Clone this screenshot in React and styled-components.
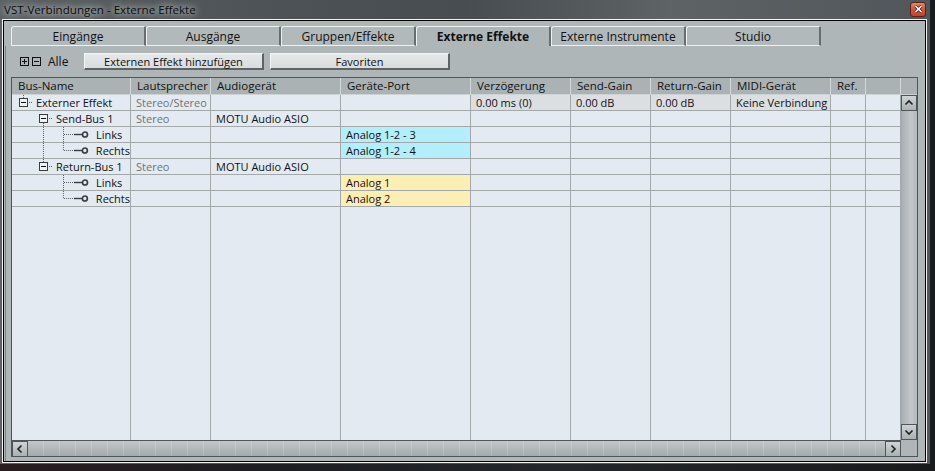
import React from 'react';
import styled, { createGlobalStyle } from 'styled-components';

const GlobalStyle = createGlobalStyle`
  html, body {
    margin: 0;
    padding: 0;
    background: #1b1c1e;
  }
  body {
    font-family: "Open Sans", "Noto Sans", sans-serif;
    font-size: 11px;
    color: #111;
  }
`;

const COLS = '119px 80px 130px 130px 100px 80px 80px 100px 35px 35px';

const Desktop = styled.div`
  width: 935px;
  height: 471px;
  overflow: hidden;
  background: linear-gradient(90deg, #2a1d20 0%, #1d1f23 30%, #24272b 60%, #1a1b1d 100%);
`;

const Window = styled.div`
  width: 930px;
  height: 464px;
  box-sizing: border-box;
  padding: 0 3px 1px 2px;
  display: flex;
  flex-direction: column;
  background: linear-gradient(90deg, #5c6264 0%, #4c5255 30%, #474d50 50%, #5e6365 72%, #50565a 100%);
`;

const TitleBar = styled.div`
  height: 19px;
  display: flex;
  align-items: center;
  justify-content: space-between;
  padding-left: 2px;
`;

const Title = styled.span`
  font-size: 11.6px;
  color: #0c0c0c;
  text-shadow: 0 0 6px rgba(235, 240, 240, 0.9), 0 0 10px rgba(235, 240, 240, 0.6);
`;

const CloseButton = styled.div`
  width: 16px;
  height: 15px;
  margin-right: 1px;
  margin-top: -1px;
  box-sizing: border-box;
  border: 1px solid #5b2418;
  border-radius: 3px;
  background: linear-gradient(#e88468, #d4553a 50%, #c2432a);
  display: flex;
  align-items: center;
  justify-content: center;
`;

const Frame = styled.div`
  flex: 1;
  display: flex;
  border: 1px solid #f2f2f2;
`;

const Content = styled.div`
  flex: 1;
  display: flex;
  flex-direction: column;
  border: 1px solid #000;
  background: #aeb6b8;
  padding-top: 5px;
`;

const TabStrip = styled.div`
  display: flex;
  height: 20px;
  padding-left: 7px;
`;

const Tab = styled.div`
  width: 135px;
  height: 20px;
  box-sizing: border-box;
  display: flex;
  align-items: center;
  justify-content: center;
  font-size: 12px;
  font-weight: ${p => (p.$active ? 700 : 400)};
  background: ${p => (p.$active ? '#aeb6b8' : '#b1b9bb')};
  border-top: 1px solid #eef1f1;
  border-left: 1px solid #eef1f1;
  border-right: 2px solid #676d70;
  border-bottom: ${p => (p.$active ? 'none' : '1px solid #eef1f1')};
  border-top-left-radius: 3px;
  border-top-right-radius: 2px;
`;

const Panel = styled.div`
  flex: 1;
  display: flex;
  flex-direction: column;
  margin-left: 1px;
  border-left: 1px solid #7d8487;
  padding: 7px 0 4px 5px;
`;

const Toolbar = styled.div`
  height: 17px;
  display: flex;
  align-items: center;
  margin-bottom: 7px;
`;

const ExpandAll = styled.div`
  display: flex;
  align-items: center;
  gap: 3px;
  margin-left: 9px;
  width: 64px;
  font-size: 12px;
`;

const AllLabel = styled.span`
  margin-left: 4px;
`;

const ToolButton = styled.div`
  width: 180px;
  height: 17px;
  box-sizing: border-box;
  margin-right: 6px;
  display: flex;
  align-items: center;
  justify-content: center;
  font-size: 11px;
  background: linear-gradient(#e6e9ea, #d9dcdd);
  border-top: 1px solid #f4f6f6;
  border-left: 1px solid #f4f6f6;
  border-right: 2px solid #5e6466;
  border-bottom: 2px solid #5e6466;
`;

const Table = styled.div`
  flex: 1;
  width: 907px;
  box-sizing: border-box;
  border: 1px solid #4f5558;
  display: flex;
  flex-direction: column;
  font-size: 11px;
`;

const HeaderRow = styled.div`
  display: flex;
  height: 17px;
  box-sizing: border-box;
  background: #aab2b4;
  border-bottom: 1px solid #cdd2d4;
  font-size: 11.5px;
`;

const HeaderGrid = styled.div`
  display: grid;
  grid-template-columns: ${COLS};
`;

const HeaderCell = styled.div`
  border-right: 1px solid #d3d7d9;
  padding-left: 6px;
  line-height: 16px;
  white-space: nowrap;
  overflow: hidden;
`;

const Body = styled.div`
  flex: 1;
  display: flex;
  min-height: 0;
`;

const Grid = styled.div`
  width: 889px;
  display: flex;
  flex-direction: column;
  background: #e3eaf1;
`;

const Row = styled.div`
  display: grid;
  grid-template-columns: ${COLS};
  height: 16px;
  box-sizing: border-box;
  border-bottom: 1px solid #a3a8ab;
`;

const Filler = styled.div`
  flex: 1;
  display: grid;
  grid-template-columns: ${COLS};
`;

const toneBg = {
  cyan: '#b2eefb',
  yellow: '#fdefb3',
  gray: '#dcdfe1',
};

const Cell = styled.div`
  border-right: 1px solid #a3a8ab;
  padding-left: ${p => (p.$flush ? 0 : 5)}px;
  line-height: 15px;
  white-space: nowrap;
  overflow: hidden;
  display: flex;
  align-items: center;
  color: ${p => (p.$muted ? '#6f7274' : '#111')};
  background: ${p => (p.$tone ? toneBg[p.$tone] : 'transparent')};
`;

const VScroll = styled.div`
  width: 16px;
  display: flex;
  flex-direction: column;
  background: linear-gradient(90deg, #a6adb0, #c3c8ca 60%, #b3babc);
`;

const ScrollButton = styled.div`
  width: 16px;
  height: 16px;
  box-sizing: border-box;
  display: flex;
  align-items: center;
  justify-content: center;
  border: 1px solid #4f5558;
  background: linear-gradient(#cfd4d5, #aab1b3);
`;

const Track = styled.div`
  flex: 1;
`;

const HScrollRow = styled.div`
  height: 16px;
  display: flex;
`;

const HScroll = styled.div`
  width: 889px;
  display: flex;
  border-top: 1px solid #4f5558;
  box-sizing: border-box;
  background:
    repeating-linear-gradient(90deg, transparent 0 15px, rgba(255, 255, 255, 0.18) 15px 16px),
    linear-gradient(#c2c7c9, #a3aaac);
`;

const HTrack = styled.div`
  flex: 1;
`;

const Corner = styled.div`
  flex: 1;
  background: #aeb6b8;
`;

const Chevron = ({ dir }) => {
  const d = {
    up: 'M1.5 5.5 L5 2 L8.5 5.5',
    down: 'M1.5 2.5 L5 6 L8.5 2.5',
    left: 'M5.5 1.5 L2 5 L5.5 8.5',
    right: 'M2.5 1.5 L6 5 L2.5 8.5',
  }[dir];
  const vertical = dir === 'up' || dir === 'down';
  return (
    <svg width={vertical ? 10 : 8} height={vertical ? 8 : 10} viewBox={vertical ? '0 0 10 8' : '0 0 8 10'}>
      <path d={d} fill="none" stroke="#1d2122" strokeWidth="1.6" />
    </svg>
  );
};

const BoxIcon = ({ plus }) => (
  <svg width="9" height="9" viewBox="0 0 9 9">
    <rect x="0.5" y="0.5" width="8" height="8" fill="none" stroke="#111" />
    <path d="M2 4.5 H7" stroke="#111" />
    {plus && <path d="M4.5 2 V7" stroke="#111" />}
  </svg>
);

const dot = { stroke: '#5c5f61', strokeWidth: 1, strokeDasharray: '1 1' };

const Expander = ({ x }) => (
  <g>
    <rect x={x + 0.5} y="3.5" width="8" height="8" fill="#eef2f6" stroke="#3a3d3f" />
    <path d={`M${x + 2} 7.5 H${x + 7}`} stroke="#111" />
  </g>
);

const TreeGlyph = ({ kind, cont, last, top }) => {
  if (kind === 'root') {
    return (
      <svg width="24" height="15" viewBox="0 0 24 15">
        <path d="M11.5 0 V3" {...dot} />
        <Expander x={7} />
        <path d="M17 7.5 H21" {...dot} />
      </svg>
    );
  }
  if (kind === 'group') {
    return (
      <svg width="44" height="15" viewBox="0 0 44 15">
        {top ? <path d="M31.5 0 V3" {...dot} /> : <path d="M31.5 12 V15" {...dot} />}
        <Expander x={27} />
        <path d="M37 7.5 H41" {...dot} />
      </svg>
    );
  }
  return (
    <svg width="84" height="15" viewBox="0 0 84 15">
      {cont && <path d="M31.5 0 V15" {...dot} />}
      <path d={`M51.5 0 V${last ? 7.5 : 15}`} {...dot} />
      <path d="M52 7.5 H62" {...dot} />
      <path d="M62 7.5 H70" stroke="#3b3e40" strokeWidth="1.4" />
      <circle cx="73" cy="7.5" r="2.5" fill="none" stroke="#3b3e40" strokeWidth="1.7" />
    </svg>
  );
};

const headers = ['Bus-Name', 'Lautsprecher', 'Audiogerät', 'Geräte-Port', 'Verzögerung', 'Send-Gain', 'Return-Gain', 'MIDI-Gerät', 'Ref.', ''];

const rows = [
  { kind: 'root', name: 'Externer Effekt', speaker: 'Stereo/Stereo', delay: '0.00 ms (0)', send: '0.00 dB', ret: '0.00 dB', midi: 'Keine Verbindung' },
  { kind: 'group', name: 'Send-Bus 1', speaker: 'Stereo', device: 'MOTU Audio ASIO' },
  { kind: 'leaf', cont: true, name: 'Links', port: 'Analog 1-2 - 3', tone: 'cyan' },
  { kind: 'leaf', cont: true, last: true, name: 'Rechts', port: 'Analog 1-2 - 4', tone: 'cyan' },
  { kind: 'group', top: true, name: 'Return-Bus 1', speaker: 'Stereo', device: 'MOTU Audio ASIO' },
  { kind: 'leaf', name: 'Links', port: 'Analog 1', tone: 'yellow' },
  { kind: 'leaf', last: true, name: 'Rechts', port: 'Analog 2', tone: 'yellow' },
];

const tabs = ['Eingänge', 'Ausgänge', 'Gruppen/Effekte', 'Externe Effekte', 'Externe Instrumente', 'Studio'];

function App() {
  return (
    <Desktop>
      <GlobalStyle />
      <Window>
        <TitleBar>
          <Title>VST-Verbindungen - Externe Effekte</Title>
          <CloseButton>
            <svg width="9" height="8" viewBox="0 0 9 8">
              <path d="M1.5 1 L7.5 7 M7.5 1 L1.5 7" stroke="#4a1a10" strokeWidth="3" />
              <path d="M1.5 1 L7.5 7 M7.5 1 L1.5 7" stroke="#fff" strokeWidth="1.6" />
            </svg>
          </CloseButton>
        </TitleBar>
        <Frame>
          <Content>
            <TabStrip>
              {tabs.map(t => (
                <Tab key={t} $active={t === 'Externe Effekte'}>{t}</Tab>
              ))}
            </TabStrip>
            <Panel>
              <Toolbar>
                <ExpandAll>
                  <BoxIcon plus />
                  <BoxIcon />
                  <AllLabel>Alle</AllLabel>
                </ExpandAll>
                <ToolButton>Externen Effekt hinzufügen</ToolButton>
                <ToolButton>Favoriten</ToolButton>
              </Toolbar>
              <Table>
                <HeaderRow>
                  <HeaderGrid>
                    {headers.map((h, i) => (
                      <HeaderCell key={i}>{h}</HeaderCell>
                    ))}
                  </HeaderGrid>
                </HeaderRow>
                <Body>
                  <Grid>
                    {rows.map((r, i) => (
                      <Row key={i}>
                        <Cell $flush>
                          <TreeGlyph kind={r.kind} cont={r.cont} last={r.last} top={r.top} />
                          {r.name}
                        </Cell>
                        <Cell $muted>{r.speaker}</Cell>
                        <Cell>{r.device}</Cell>
                        <Cell $tone={r.tone}>{r.port}</Cell>
                        <Cell $tone={r.delay ? 'gray' : undefined}>{r.delay}</Cell>
                        <Cell $tone={r.send ? 'gray' : undefined}>{r.send}</Cell>
                        <Cell $tone={r.ret ? 'gray' : undefined}>{r.ret}</Cell>
                        <Cell $tone={r.midi ? 'gray' : undefined}>{r.midi}</Cell>
                        <Cell />
                        <Cell />
                      </Row>
                    ))}
                    <Filler>
                      {headers.map((_, i) => (
                        <Cell key={i} />
                      ))}
                    </Filler>
                  </Grid>
                  <VScroll>
                    <ScrollButton><Chevron dir="up" /></ScrollButton>
                    <Track />
                    <ScrollButton><Chevron dir="down" /></ScrollButton>
                  </VScroll>
                </Body>
                <HScrollRow>
                  <HScroll>
                    <ScrollButton><Chevron dir="left" /></ScrollButton>
                    <HTrack />
                    <ScrollButton><Chevron dir="right" /></ScrollButton>
                  </HScroll>
                  <Corner />
                </HScrollRow>
              </Table>
            </Panel>
          </Content>
        </Frame>
      </Window>
    </Desktop>
  );
}

export default App;
